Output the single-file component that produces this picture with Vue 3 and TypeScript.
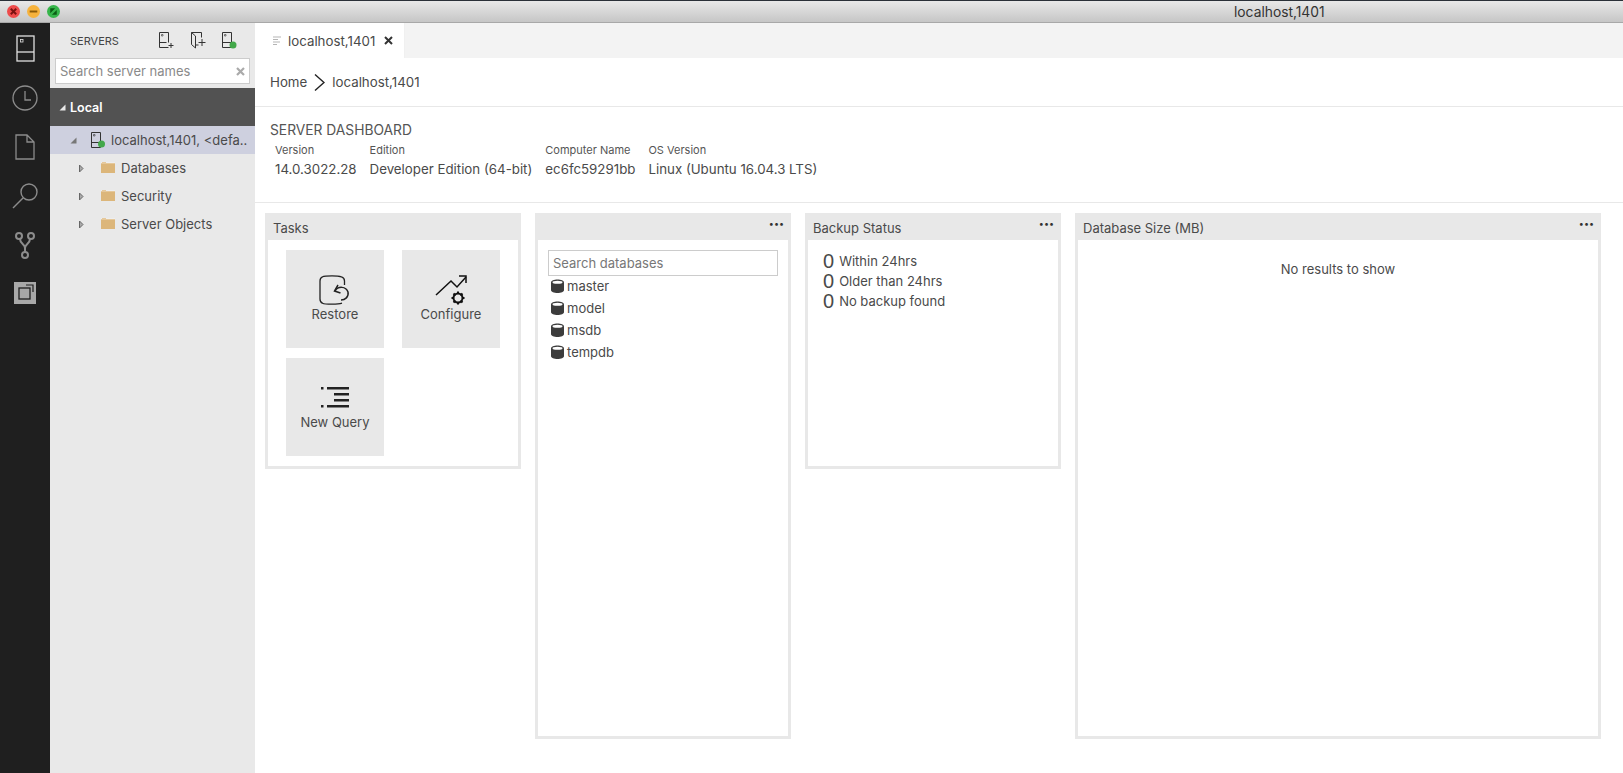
<template>
  <div class="window">
    <header class="titlebar">
      <div class="lights">
        <span class="light red"><svg viewBox="0 0 12 12"><path d="M3.500 3.500l5 5M8.500 3.500l-5 5" stroke="#7a1210" stroke-width="1.800" /></svg></span>
        <span class="light amber"><svg viewBox="0 0 12 12"><path d="M2.500 6h7" stroke="#8a5a08" stroke-width="1.800" /></svg></span>
        <span class="light green"><svg viewBox="0 0 12 12"><path d="M3 3h4.500L3 7.500zM9 9H4.500L9 4.500z" fill="#0b5c14" /></svg></span>
      </div>
      <span class="window-title">localhost,1401</span>
    </header>

    <div class="workbench">
      <nav class="activity">
        <svg class="act act-server" width="19" height="27" viewBox="0 0 19 27" fill="none" stroke="#e0e0e0" stroke-width="1.300">
          <rect x="1" y="1" width="17" height="25" />
          <path d="M1 17h17" />
          <rect x="4.500" y="4.500" width="2.500" height="2.500" stroke-width="0.800" />
        </svg>
        <svg class="act" width="26" height="26" viewBox="0 0 26 26" fill="none" stroke="#8c8c8c" stroke-width="1.300">
          <circle cx="13" cy="13" r="12" />
          <path d="M13 6v9h6" />
        </svg>
        <svg class="act" width="20" height="26" viewBox="0 0 20 26" fill="none" stroke="#8c8c8c" stroke-width="1.300">
          <path d="M1 1h11l7 7v17H1zM12 1v7h7" />
        </svg>
        <svg class="act" width="26" height="26" viewBox="0 0 26 26" fill="none" stroke="#8c8c8c" stroke-width="1.400">
          <circle cx="17" cy="9" r="8" />
          <path d="M11 15L1 25" />
        </svg>
        <svg class="act" width="20" height="27" viewBox="0 0 20 27" fill="none" stroke="#8c8c8c" stroke-width="2">
          <circle cx="4" cy="4" r="3" />
          <circle cx="16" cy="4" r="3" />
          <circle cx="10" cy="23" r="3" />
          <path d="M5 7c0 5 5 5 5 9v4M15 7c0 5-5 5-5 9" />
        </svg>
        <svg class="act" width="22" height="22" viewBox="0 0 22 22">
          <rect width="22" height="22" fill="#a8a8a8" />
          <path d="M12 3h7v7" fill="none" stroke="#1e1e1e" stroke-width="1.200" />
          <rect x="5" y="6" width="11" height="11" fill="#a8a8a8" stroke="#1e1e1e" stroke-width="1.300" />
        </svg>
      </nav>

      <aside class="sidebar">
        <div class="side-head">
          <span class="side-title">SERVERS</span>
          <div class="side-actions">
            <svg width="15" height="17" viewBox="0 0 15 17" fill="none" stroke="#333" stroke-width="1">
              <path d="M9.500 15.500H.5V.5h9v10M.5 10.500h7" />
              <path d="M12 11v5M9.500 13.500h5" />
              <path d="M2.500 2.500h1.500v1.500H2.500z" stroke-width="0.600" />
            </svg>
            <svg width="15" height="17" viewBox="0 0 15 17" fill="none" stroke="#333" stroke-width="1">
              <path d="M.5.500h10v5M.5.500v12l4 3.500V4zM4.500 13h3" />
              <path d="M11 7v7M7.500 10.500h7" />
            </svg>
            <svg width="15" height="17" viewBox="0 0 15 17" fill="none" stroke="#333" stroke-width="1">
              <path d="M.5.500h9v15h-9zM.5 10.500h9" />
              <path d="M2.500 2.500h1.500v1.500H2.500z" stroke-width="0.600" />
              <circle cx="11" cy="13" r="3.500" fill="#43a84a" stroke="none" />
            </svg>
          </div>
        </div>
        <div class="side-search">
          <input class="side-input" type="text" placeholder="Search server names" />
          <svg class="side-clear" width="9" height="9" viewBox="0 0 9 9" stroke="#aaa" stroke-width="2.200"><path d="M1 1l7 7M8 1L1 8" /></svg>
        </div>
        <div class="group-row">
          <svg class="arrow-open" width="7" height="7" viewBox="0 0 7 7"><path d="M6.500.5v6H.5z" fill="#e8e8e8" /></svg>
          <span>Local</span>
        </div>
        <div class="server-row">
          <svg class="arrow-open" width="7" height="7" viewBox="0 0 7 7"><path d="M6.500.5v6H.5z" fill="#777" /></svg>
          <svg class="server-icon" width="15" height="16" viewBox="0 0 15 16" fill="none" stroke="#333" stroke-width="1">
            <path d="M.5.500h9v15h-9zM.5 10.500h9" />
            <path d="M2.500 2.500h1.500v1.500H2.500z" stroke-width="0.600" />
            <circle cx="10.500" cy="12" r="3.500" fill="#43a84a" stroke="none" />
          </svg>
          <span>{{ serverLabel }}</span>
        </div>
        <div v-for="node in treeNodes" :key="node" class="tree-row">
          <svg width="5" height="9" viewBox="0 0 5 9" fill="#aaa" stroke="#666"><path d="M.5 1l3.500 3.500L.5 8z" /></svg>
          <svg class="folder" width="14" height="12" viewBox="0 0 14 12"><path d="M0 2h1V1h4v1h9v10H0z" fill="#dcb67a" /><path d="M0 2h14" stroke="#fff" stroke-opacity="0.500" /></svg>
          <span>{{ node }}</span>
        </div>
      </aside>

      <main class="main">
        <div class="tabs">
          <div class="tab">
            <svg width="9" height="9" viewBox="0 0 9 9" stroke="#b5b5b5"><path d="M0 1h8M0 3.500h5M0 6h7M0 8.500h4" /></svg>
            <span>localhost,1401</span>
            <svg class="tab-close" width="9" height="9" viewBox="0 0 9 9" stroke="#333" stroke-width="2"><path d="M1 1l7 7M8 1L1 8" /></svg>
          </div>
        </div>

        <div class="crumbs">
          <span>Home</span>
          <svg width="11" height="17" viewBox="0 0 11 17" fill="none" stroke="#222" stroke-width="1.400"><path d="M1 .5l9 8-9 8" /></svg>
          <span>localhost,1401</span>
        </div>

        <section class="summary">
          <div class="summary-title">SERVER DASHBOARD</div>
          <div class="props">
            <div v-for="prop in properties" :key="prop.label" class="prop">
              <div class="prop-label">{{ prop.label }}</div>
              <div class="prop-value">{{ prop.value }}</div>
            </div>
          </div>
        </section>

        <section class="grid">
          <article class="card">
            <div class="card-head"><span>Tasks</span></div>
            <div class="card-body tasks">
              <div class="tile">
                <svg width="32" height="30" viewBox="0 0 32 30" fill="none" stroke="#222" stroke-width="1.300">
                  <path d="M25.500 10V6c0-2-.5-3.500-3-4.200C20 1 16.500.8 13 .8S5 1 3.500 1.800C1.500 2.500 1 4 1 6v18c0 2 .5 3.500 2.500 4.200C5 29 9 29.200 13 29.200s7.500-.2 10-1" />
                  <path d="M16 16c3-5 11-5 13 1 1 5-3 8-7 8" stroke-width="1.500" />
                  <path d="M19 10l-3.500 6 6 2" stroke-width="1.500" />
                </svg>
                <span>Restore</span>
              </div>
              <div class="tile">
                <svg width="32" height="30" viewBox="0 0 32 30" fill="none" stroke="#111" stroke-width="1.500">
                  <path d="M1 20L16 6l6 6L31 2" />
                  <path d="M24 1h7v7" />
                  <circle cx="23" cy="23" r="4.500" stroke-width="2" />
                  <path d="M23 16.500v2.500M23 27v2.500M16.500 23H19M27 23h2.500M18.500 18.500l2 2M25.500 25.500l2 2M27.500 18.500l-2 2M20.500 25.500l-2 2" stroke-width="2" />
                </svg>
                <span>Configure</span>
              </div>
              <div class="tile">
                <svg width="30" height="30" viewBox="0 0 30 30" fill="#222">
                  <rect x="1" y="4" width="2.500" height="2.500" />
                  <rect x="1" y="22" width="2.500" height="2.500" />
                  <rect x="7" y="4" width="22" height="2.500" />
                  <rect x="14" y="10" width="15" height="2.500" />
                  <rect x="14" y="16" width="15" height="2.500" />
                  <rect x="7" y="22" width="22" height="2.500" />
                </svg>
                <span>New Query</span>
              </div>
            </div>
          </article>

          <article class="card card-tall">
            <div class="card-head"><span></span><span class="dots">•••</span></div>
            <div class="card-body dbs">
              <input class="db-search" type="text" placeholder="Search databases" />
              <div v-for="db in databases" :key="db" class="db-row">
                <svg width="13" height="14" viewBox="0 0 13 14">
                  <path d="M0 3.500C0 1.500 3 .5 6.500.5S13 1.500 13 3.500v7.500c0 2-3 3-6.500 3S0 13 0 11z" fill="#3c3c3c" />
                  <ellipse cx="6.500" cy="3.200" rx="5" ry="1.500" fill="#fff" />
                </svg>
                <span>{{ db }}</span>
              </div>
            </div>
          </article>

          <article class="card">
            <div class="card-head"><span>Backup Status</span><span class="dots">•••</span></div>
            <div class="card-body backups">
              <div v-for="item in backups" :key="item" class="backup-row">
                <span class="backup-count">0</span>
                <span>{{ item }}</span>
              </div>
            </div>
          </article>

          <article class="card card-wide">
            <div class="card-head"><span>Database Size (MB)</span><span class="dots">•••</span></div>
            <div class="card-body empty">No results to show</div>
          </article>
        </section>
      </main>
    </div>
  </div>
</template>

<script setup lang="ts">
const serverLabel = "localhost,1401, <defa..";
const treeNodes = ["Databases", "Security", "Server Objects"];
const databases = ["master", "model", "msdb", "tempdb"];
const backups = ["Within 24hrs", "Older than 24hrs", "No backup found"];
const properties = [
  { label: "Version", value: "14.0.3022.28" },
  { label: "Edition", value: "Developer Edition (64-bit)" },
  { label: "Computer Name", value: "ec6fc59291bb" },
  { label: "OS Version", value: "Linux (Ubuntu 16.04.3 LTS)" },
];
</script>

<style>
html,
body {
  margin: 0;
  background: #fff;
  overflow: hidden;
}
</style>

<style scoped>
.window {
  width: 1623px;
  height: 773px;
  display: flex;
  flex-direction: column;
  font-family: Inter, "Liberation Sans", sans-serif;
  font-size: 13px;
  color: #4a4a4a;
  background: #fff;
}

.titlebar {
  height: 23px;
  flex: none;
  box-sizing: border-box;
  display: flex;
  align-items: center;
  background: linear-gradient(#e8e8e8, #c6c6c6);
  border-top: 1px solid #2a3038;
  border-bottom: 1px solid #a8a8a8;
}

.lights {
  display: flex;
  gap: 7px;
  padding-left: 7px;
}

.light {
  width: 13px;
  height: 13px;
  border-radius: 50%;
  display: block;
}

.light svg {
  display: block;
}

.red {
  background: #ee4b4b;
}

.amber {
  background: #f6b23c;
}

.green {
  background: #36b54a;
}

.window-title {
  margin-left: 1174px;
  color: #333;
  font-size: 13.800px;
}

.workbench {
  flex: 1;
  display: flex;
  min-height: 0;
}

.activity {
  width: 50px;
  flex: none;
  background: #1f1f1f;
  display: flex;
  flex-direction: column;
  align-items: center;
  padding-top: 12px;
  gap: 23px;
  box-sizing: border-box;
}

.sidebar {
  width: 205px;
  flex: none;
  background: #e9e9e9;
}

.side-head {
  height: 35px;
  display: flex;
  align-items: center;
  justify-content: space-between;
  padding: 0 18px 0 20px;
}

.side-title {
  font-size: 11px;
  color: #444;
}

.side-actions {
  display: flex;
  gap: 16.500px;
}

.side-search {
  margin: 0 5px 4px;
  height: 26px;
  position: relative;
}

.side-input {
  width: 100%;
  height: 100%;
  box-sizing: border-box;
  border: 1px solid #ccc;
  background: #fff;
  padding: 0 20px 0 4px;
  font: inherit;
  outline: none;
}

.side-input::placeholder {
  color: #8a8a8a;
  opacity: 1;
}

.side-clear {
  position: absolute;
  right: 5px;
  top: 9px;
}

.group-row {
  height: 38px;
  display: flex;
  align-items: center;
  gap: 4px;
  padding-left: 9px;
  background: #525252;
  color: #fff;
  font-weight: 600;
  font-size: 12.500px;
}

.server-row {
  height: 28px;
  display: flex;
  align-items: center;
  padding-left: 20px;
  background: #ced0df;
  white-space: nowrap;
}

.server-icon {
  margin: 0 5px 0 14px;
}

.tree-row {
  height: 28px;
  display: flex;
  align-items: center;
  padding-left: 29px;
}

.folder {
  margin: -3px 6px 0 17px;
}

.main {
  flex: 1;
  min-width: 0;
  display: flex;
  flex-direction: column;
}

.tabs {
  height: 35px;
  flex: none;
  background: #f3f3f3;
  display: flex;
  font-size: 13.300px;
}

.tab {
  width: 150px;
  box-sizing: border-box;
  background: #fff;
  border-right: 1px solid #f0f0f0;
  display: flex;
  align-items: center;
  padding-left: 18px;
  gap: 6px;
}

.tab-close {
  margin-left: 3px;
}

.crumbs {
  height: 49px;
  flex: none;
  box-sizing: border-box;
  border-bottom: 1px solid #e8e8e8;
  display: flex;
  align-items: center;
  padding-left: 15px;
  gap: 7px;
  font-size: 13.300px;
}

.summary {
  height: 96px;
  flex: none;
  box-sizing: border-box;
  border-bottom: 1px solid #e8e8e8;
  padding: 15px 15px 0;
}

.summary-title {
  line-height: 16px;
  font-size: 13.800px;
  color: #555;
}

.props {
  display: flex;
  gap: 13px;
  padding-left: 5px;
  margin-top: 4px;
}

.prop-label {
  font-size: 11px;
  line-height: 17px;
  color: #555;
}

.prop-value {
  line-height: 20px;
  font-size: 13.300px;
}

.grid {
  display: grid;
  grid-template-columns: repeat(3, 256px) 526px;
  grid-template-rows: 256px 256px;
  column-gap: 14px;
  row-gap: 14px;
  padding: 10px 0 0 10px;
}

.card {
  display: flex;
  flex-direction: column;
  box-sizing: border-box;
  border: 3px solid #e8e8e8;
  border-top: 0;
}

.card-tall,
.card-wide {
  grid-row: span 2;
}

.card-head {
  height: 27px;
  flex: none;
  box-sizing: border-box;
  background: #e8e8e8;
  display: flex;
  align-items: center;
  justify-content: space-between;
  margin: 0 -3px;
  padding: 3px 3px 0 8px;
}

.dots {
  font-size: 9px;
  letter-spacing: 0;
  color: #333;
  margin: -9px 4px 0 0;
}

.card-body {
  flex: 1;
  min-height: 0;
}

.tasks {
  display: grid;
  grid-template-columns: 98px 98px;
  grid-auto-rows: 98px;
  gap: 10px 18px;
  padding: 10px 0 0 18px;
}

.tile {
  background: #e8e8e8;
  display: flex;
  flex-direction: column;
  align-items: center;
  padding-top: 25px;
  box-sizing: border-box;
  gap: 1px;
}

.dbs {
  padding: 10px 10px 0;
}

.db-search {
  display: block;
  width: 100%;
  height: 26px;
  box-sizing: border-box;
  border: 1px solid #ccc;
  padding: 0 4px;
  margin-bottom: -1px;
  font: inherit;
  outline: none;
}

.db-search::placeholder {
  color: #777;
  opacity: 1;
}

.db-row {
  height: 22px;
  display: flex;
  align-items: center;
  gap: 3px;
  padding-left: 3px;
}

.backups {
  padding: 11px 0 0 15px;
}

.backup-row {
  height: 20px;
  display: flex;
  align-items: center;
  gap: 5px;
}

.backup-count {
  font-family: "Liberation Sans", sans-serif;
  font-size: 20px;
  line-height: 20px;
}

.empty {
  padding-top: 21px;
  text-align: center;
}
</style>
